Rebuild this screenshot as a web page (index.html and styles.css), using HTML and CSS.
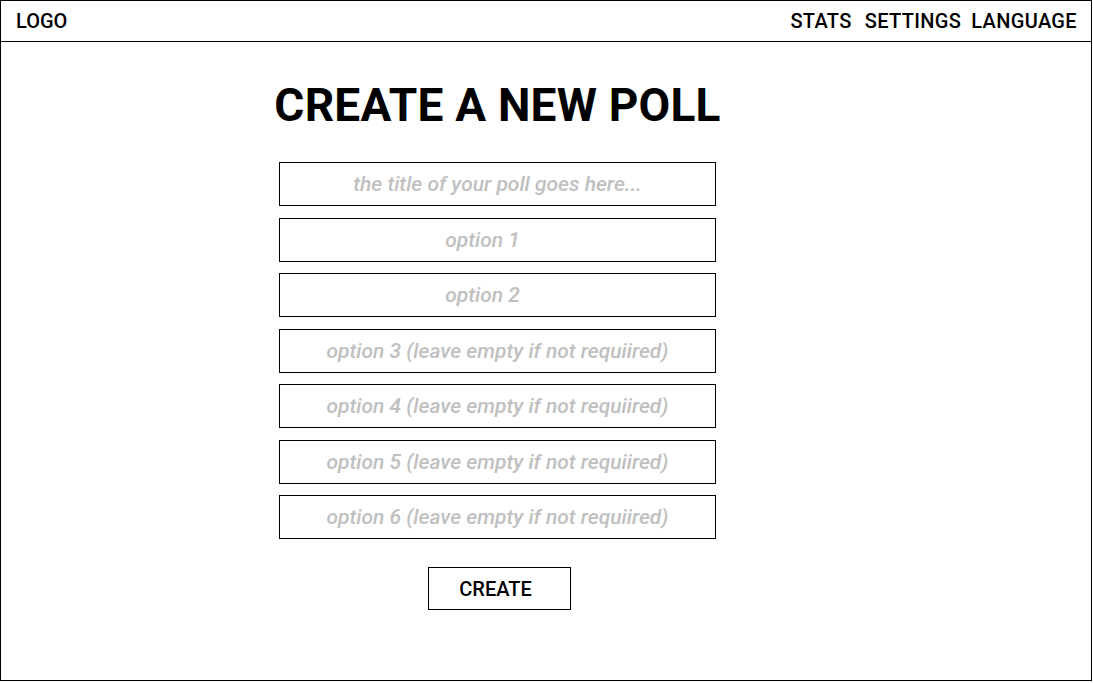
FILE: index.html
```html
<!DOCTYPE html>
<html lang="en">
<head>
<meta charset="utf-8">
<title>Create a new poll</title>
<link rel="stylesheet" href="styles.css">
</head>
<body>
<div class="frame">
  <header class="topbar">
    <div class="logo">LOGO</div>
    <nav class="nav">
      <a class="nav-item nav-stats" href="#">STATS</a>
      <a class="nav-item nav-settings" href="#">SETTINGS</a>
      <a class="nav-item" href="#">LANGUAGE</a>
    </nav>
  </header>
  <main class="content">
    <h1 class="title">CREATE A NEW POLL</h1>
    <form class="poll-form">
      <input class="field" type="text" placeholder="the title of your poll goes here...">
      <input class="field field-short" type="text" placeholder="option 1">
      <input class="field field-short" type="text" placeholder="option 2">
      <input class="field" type="text" placeholder="option 3 (leave empty if not requiired)">
      <input class="field" type="text" placeholder="option 4 (leave empty if not requiired)">
      <input class="field" type="text" placeholder="option 5 (leave empty if not requiired)">
      <input class="field" type="text" placeholder="option 6 (leave empty if not requiired)">
      <button class="create-btn" type="button">CREATE</button>
    </form>
  </main>
</div>
</body>
</html>
```
FILE: styles.css
```css
* { box-sizing: border-box; }

html, body {
  margin: 0;
  padding: 0;
  background: #fff;
}

body {
  font-family: Roboto, "Liberation Sans", Arial, sans-serif;
  color: #000;
}

.frame {
  width: 1092px;
  height: 681px;
  border: 1px solid #000;
  display: flex;
  flex-direction: column;
}

.topbar {
  height: 41px;
  border-bottom: 1px solid #000;
  display: flex;
  align-items: center;
  justify-content: space-between;
  padding: 0 14px 0 15px;
}

.logo {
  font-size: 20px;
  font-weight: 500;
}

.nav {
  display: flex;
  align-items: center;
  gap: 10px;
}

.nav-item {
  font-size: 20px;
  font-weight: 500;
  letter-spacing: 0.35px;
  color: #000;
  text-decoration: none;
}

.nav-stats { margin-right: 3px; }

.content {
  width: 437px;
  margin-left: 278px;
  display: flex;
  flex-direction: column;
  align-items: center;
}

.title {
  margin: 40px 0 34px;
  font-size: 46px;
  line-height: 46px;
  font-weight: 700;
  letter-spacing: 0.2px;
  white-space: nowrap;
}

.poll-form {
  width: 100%;
  display: flex;
  flex-direction: column;
  align-items: center;
  gap: 11.5px;
}

.field {
  width: 100%;
  height: 44px;
  border: 1px solid #000;
  border-radius: 0;
  background: #fff;
  outline: none;
  padding: 0 6px;
  text-align: center;
  font-family: Roboto, "Liberation Sans", Arial, sans-serif;
  font-size: 21px;
  font-style: italic;
  font-weight: 500;
}

.field::placeholder {
  color: #c0c0c0;
  opacity: 1;
}

.field-short { padding-right: 36px; }

.create-btn {
  margin-top: 16.5px;
  width: 143px;
  height: 43px;
  border: 1px solid #000;
  border-radius: 0;
  background: #fff;
  padding: 0 8px 0 0;
  font-family: Roboto, "Liberation Sans", Arial, sans-serif;
  font-size: 20px;
  font-weight: 500;
  color: #000;
  position: relative;
  left: 2px;
}
```
